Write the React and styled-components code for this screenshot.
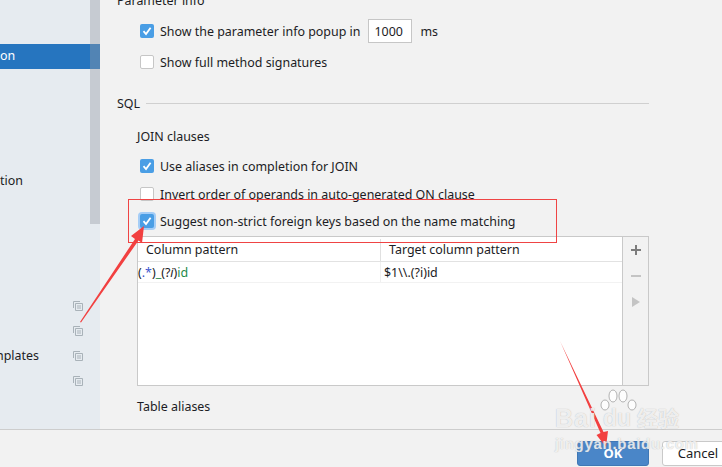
import React from "react";
import styled, { createGlobalStyle } from "styled-components";

const Global = createGlobalStyle`
  html, body { margin: 0; padding: 0; background: #f2f2f2; }
  body { font-family: "Noto Sans", "Liberation Sans", sans-serif; font-size: 12.45px; color: #1c1c24; }
`;

const Page = styled.div`
  position: relative;
  width: 722px;
  height: 467px;
  overflow: hidden;
  display: flex;
  flex-direction: column;
`;
const Body = styled.div`
  display: flex;
  height: 429px;
  flex: none;
  overflow: hidden;
`;
const Sidebar = styled.aside`
  position: relative;
  width: 100px;
  flex: none;
  background: #e6ebf0;
  padding-top: 44px;
  box-sizing: border-box;
`;
const Scrollbar = styled.div`
  position: absolute;
  top: 0;
  right: 0;
  width: 10px;
  height: 224px;
  background: rgba(150, 155, 165, 0.4);
`;
const NavRow = styled.div`
  display: flex;
  align-items: center;
  justify-content: space-between;
  height: 25px;
  padding: 0 17px 2px 0;
  box-sizing: border-box;
  background: ${(p) => (p.$active ? "#2675bf" : "transparent")};
  color: ${(p) => (p.$active ? "#fff" : "inherit")};
`;
const NavLabel = styled.span`
  margin-left: ${(p) => p.$clip || 0}px;
`;
const NavIcon = styled.svg`
  width: 10px;
  height: 10px;
  margin-left: auto;
  color: #a9b2b9;
`;
const Content = styled.main`
  flex: 1;
  padding-left: 17px;
  padding-right: 73px;
  box-sizing: border-box;
  min-width: 0;
`;
const Row = styled.div`
  display: flex;
  align-items: center;
  height: 20px;
  margin-top: ${(p) => p.$mt}px;
  padding-left: ${(p) => p.$indent || 0}px;
  white-space: nowrap;
`;
const Box = styled.span`
  width: 14px;
  height: 14px;
  margin-right: 6px;
  flex: none;
  border-radius: 2px;
  box-sizing: border-box;
  display: inline-flex;
  align-items: center;
  justify-content: center;
  background: ${(p) => (p.$checked ? "#4a9ee5" : "#fff")};
  border: ${(p) => (p.$checked ? "none" : "1px solid #c6c6c6")};
  box-shadow: ${(p) => (p.$focused ? "0 0 0 2px #a5cdf6" : "none")};
`;
const NumberField = styled.span`
  width: 44px;
  height: 24px;
  margin: 0 8px;
  box-sizing: border-box;
  background: #fff;
  border: 1px solid #c6c6c6;
  display: inline-flex;
  align-items: center;
  padding-left: 5px;
`;
const Rule = styled.span`
  flex: 1;
  height: 1px;
  background: #d0d0d0;
  margin-left: 6px;
`;
const Table = styled.section`
  display: flex;
  width: 512px;
  height: 150px;
  margin: 5px 0 0 20px;
  box-sizing: border-box;
  border: 1px solid #c9c9c9;
`;
const Grid = styled.div`
  flex: 1;
  background: #fff;
  min-width: 0;
`;
const GridRow = styled.div`
  display: grid;
  grid-template-columns: 242px 1fr;
  height: ${(p) => p.$h}px;
  box-sizing: border-box;
  border-bottom: 1px solid ${(p) => p.$line};
`;
const HeadCell = styled.div`
  display: flex;
  align-items: center;
  padding-left: 8px;
  & + & { border-left: 1px solid #e0e0e0; margin: 2px 0 0; padding-bottom: 2px; }
`;
const Cell = styled.div`
  display: flex;
  align-items: center;
  padding-left: ${(p) => p.$pad}px;
  & + & { border-left: 1px solid #f0f0f0; }
`;
const Tok = styled.span`
  color: ${(p) => p.$c || "#1c1c24"};
  font-style: ${(p) => (p.$i ? "italic" : "normal")};
`;
const Tools = styled.div`
  width: 25px;
  flex: none;
  border-left: 1px solid #c9c9c9;
  display: flex;
  flex-direction: column;
  align-items: center;
  padding-top: 5px;
  gap: 10px;
`;
const ToolIcon = styled.svg`
  width: 16px;
  height: 16px;
  color: ${(p) => p.$c};
`;
const Footer = styled.footer`
  flex: 1;
  border-top: 1px solid #cdcdcd;
  display: flex;
  gap: 13px;
  padding: 11px 0 0 577px;
  box-sizing: border-box;
`;
const Btn = styled.div`
  flex: none;
  width: 72px;
  height: 25px;
  padding-bottom: 2px;
  box-sizing: border-box;
  border-radius: 3px;
  display: flex;
  align-items: center;
  justify-content: center;
  font-size: 13px;
  background: ${(p) => (p.$primary ? "#4a86c8" : "#fff")};
  border: 1px solid ${(p) => (p.$primary ? "#3f78b6" : "#c9c9c9")};
  color: ${(p) => (p.$primary ? "#fff" : "#1c1c24")};
  font-weight: ${(p) => (p.$primary ? 700 : 400)};
`;
const Overlay = styled.svg`
  position: absolute;
  inset: 0;
  width: 722px;
  height: 467px;
  pointer-events: none;
`;
const Mark = styled.span`
  position: absolute;
  left: ${(p) => p.$x}px;
  top: ${(p) => p.$y}px;
  font: 700 ${(p) => p.$s}px/1 "Liberation Sans", "Noto Sans CJK SC", sans-serif;
  letter-spacing: ${(p) => p.$ls || 0}px;
  color: rgba(255, 255, 255, 0.8);
  text-shadow: 0 0 1px rgba(130, 130, 130, 0.6);
  white-space: nowrap;
`;

const Check = () => (
  <svg width="10" height="10" viewBox="0 0 10 10">
    <path d="M1.5 5.2 L4 8 L8.6 1.8" fill="none" stroke="#fff" strokeWidth="1.8" />
  </svg>
);
const Copy = () => (
  <NavIcon viewBox="0 0 10 10">
    <path d="M7 .5H.5V7" fill="none" stroke="currentColor" />
    <path d="M2.5 2.5h7v7h-7zM4 5h4M4 7h4" fill="none" stroke="currentColor" />
  </NavIcon>
);

export default function App() {
  return (
    <Page>
      <Global />
      <Body>
        <Sidebar>
          <Scrollbar />
          <NavRow $active>on</NavRow>
          <NavRow /><NavRow /><NavRow /><NavRow />
          <NavRow>tion</NavRow>
          <NavRow /><NavRow /><NavRow /><NavRow />
          <NavRow><Copy /></NavRow>
          <NavRow><Copy /></NavRow>
          <NavRow><NavLabel $clip={-4}>nplates</NavLabel><Copy /></NavRow>
          <NavRow><Copy /></NavRow>
        </Sidebar>
        <Content>
          <Row $mt={-10}>Parameter info</Row>
          <Row $mt={11} $indent={23}><Box $checked><Check /></Box>Show the parameter info popup in<NumberField>1000</NumberField>ms</Row>
          <Row $mt={11} $indent={23}><Box />Show full method signatures</Row>
          <Row $mt={21}>SQL<Rule /></Row>
          <Row $mt={13} $indent={20}>JOIN clauses</Row>
          <Row $mt={10} $indent={23}><Box $checked><Check /></Box>Use aliases in completion for JOIN</Row>
          <Row $mt={8} $indent={23}><Box />Invert order of operands in auto-generated ON clause</Row>
          <Row $mt={7} $indent={23}><Box $checked $focused><Check /></Box>Suggest non-strict foreign keys based on the name matching</Row>
          <Table>
            <Grid>
              <GridRow $h={25} $line="#e2e2e2">
                <HeadCell>Column pattern</HeadCell>
                <HeadCell>Target column pattern</HeadCell>
              </GridRow>
              <GridRow $h={21} $line="#f2f2f2">
                <Cell $pad={0}>
                  <span>
                    <Tok>(</Tok><Tok $c="#3a55d0">.*</Tok><Tok>)</Tok><Tok $c="#1d8a4a">_</Tok><Tok>(?</Tok><Tok $i>i</Tok><Tok>)</Tok><Tok $c="#1d8a4a">id</Tok>
                  </span>
                </Cell>
                <Cell $pad={3}>$1\\.(?i)id</Cell>
              </GridRow>
            </Grid>
            <Tools>
              <ToolIcon $c="#7c7c7c" viewBox="0 0 16 16"><path d="M8 3v10M3 8h10" stroke="currentColor" strokeWidth="2" /></ToolIcon>
              <ToolIcon $c="#c4c4c4" viewBox="0 0 16 16"><path d="M3 8h10" stroke="currentColor" strokeWidth="2" /></ToolIcon>
              <ToolIcon $c="#c4c4c4" viewBox="0 0 16 16"><path d="M4 3l8 5-8 5z" fill="currentColor" /></ToolIcon>
            </Tools>
          </Table>
          <Row $mt={10} $indent={20}>Table aliases</Row>
        </Content>
      </Body>
      <Footer>
        <Btn $primary>OK</Btn>
        <Btn>Cancel</Btn>
      </Footer>

      <Overlay viewBox="0 0 722 467">
        <rect x="128.5" y="199.5" width="428" height="43" fill="none" stroke="#ef4444" />
        <path d="M80 322 L135 239 L131 236 L144 226 L142 243 L138.5 240.5 L81 322.5 Z" fill="#f24040" />
        <path d="M560 341 L600.5 433 L596.5 435 L606 447 L608 431 L603.5 432 Z" fill="#f24040" />
        <g fill="rgba(255,255,255,.8)" stroke="rgba(130,130,130,.6)" strokeWidth="1">
          <ellipse cx="605" cy="405" rx="4" ry="5" />
          <ellipse cx="613" cy="396" rx="4" ry="6" />
          <ellipse cx="623" cy="396" rx="4" ry="6" />
          <ellipse cx="632" cy="405" rx="4" ry="5" />
        </g>
      </Overlay>
      <Mark $x={555} $y={406} $s={25} $ls={1}>Bai</Mark>
      <Mark $x={603} $y={407} $s={23}>du</Mark>
      <Mark $x={637} $y={408} $s={21}>经验</Mark>
      <Mark $x={555} $y={436} $s={15} $ls={0.7}>jingyan.baidu.com</Mark>
    </Page>
  );
}
